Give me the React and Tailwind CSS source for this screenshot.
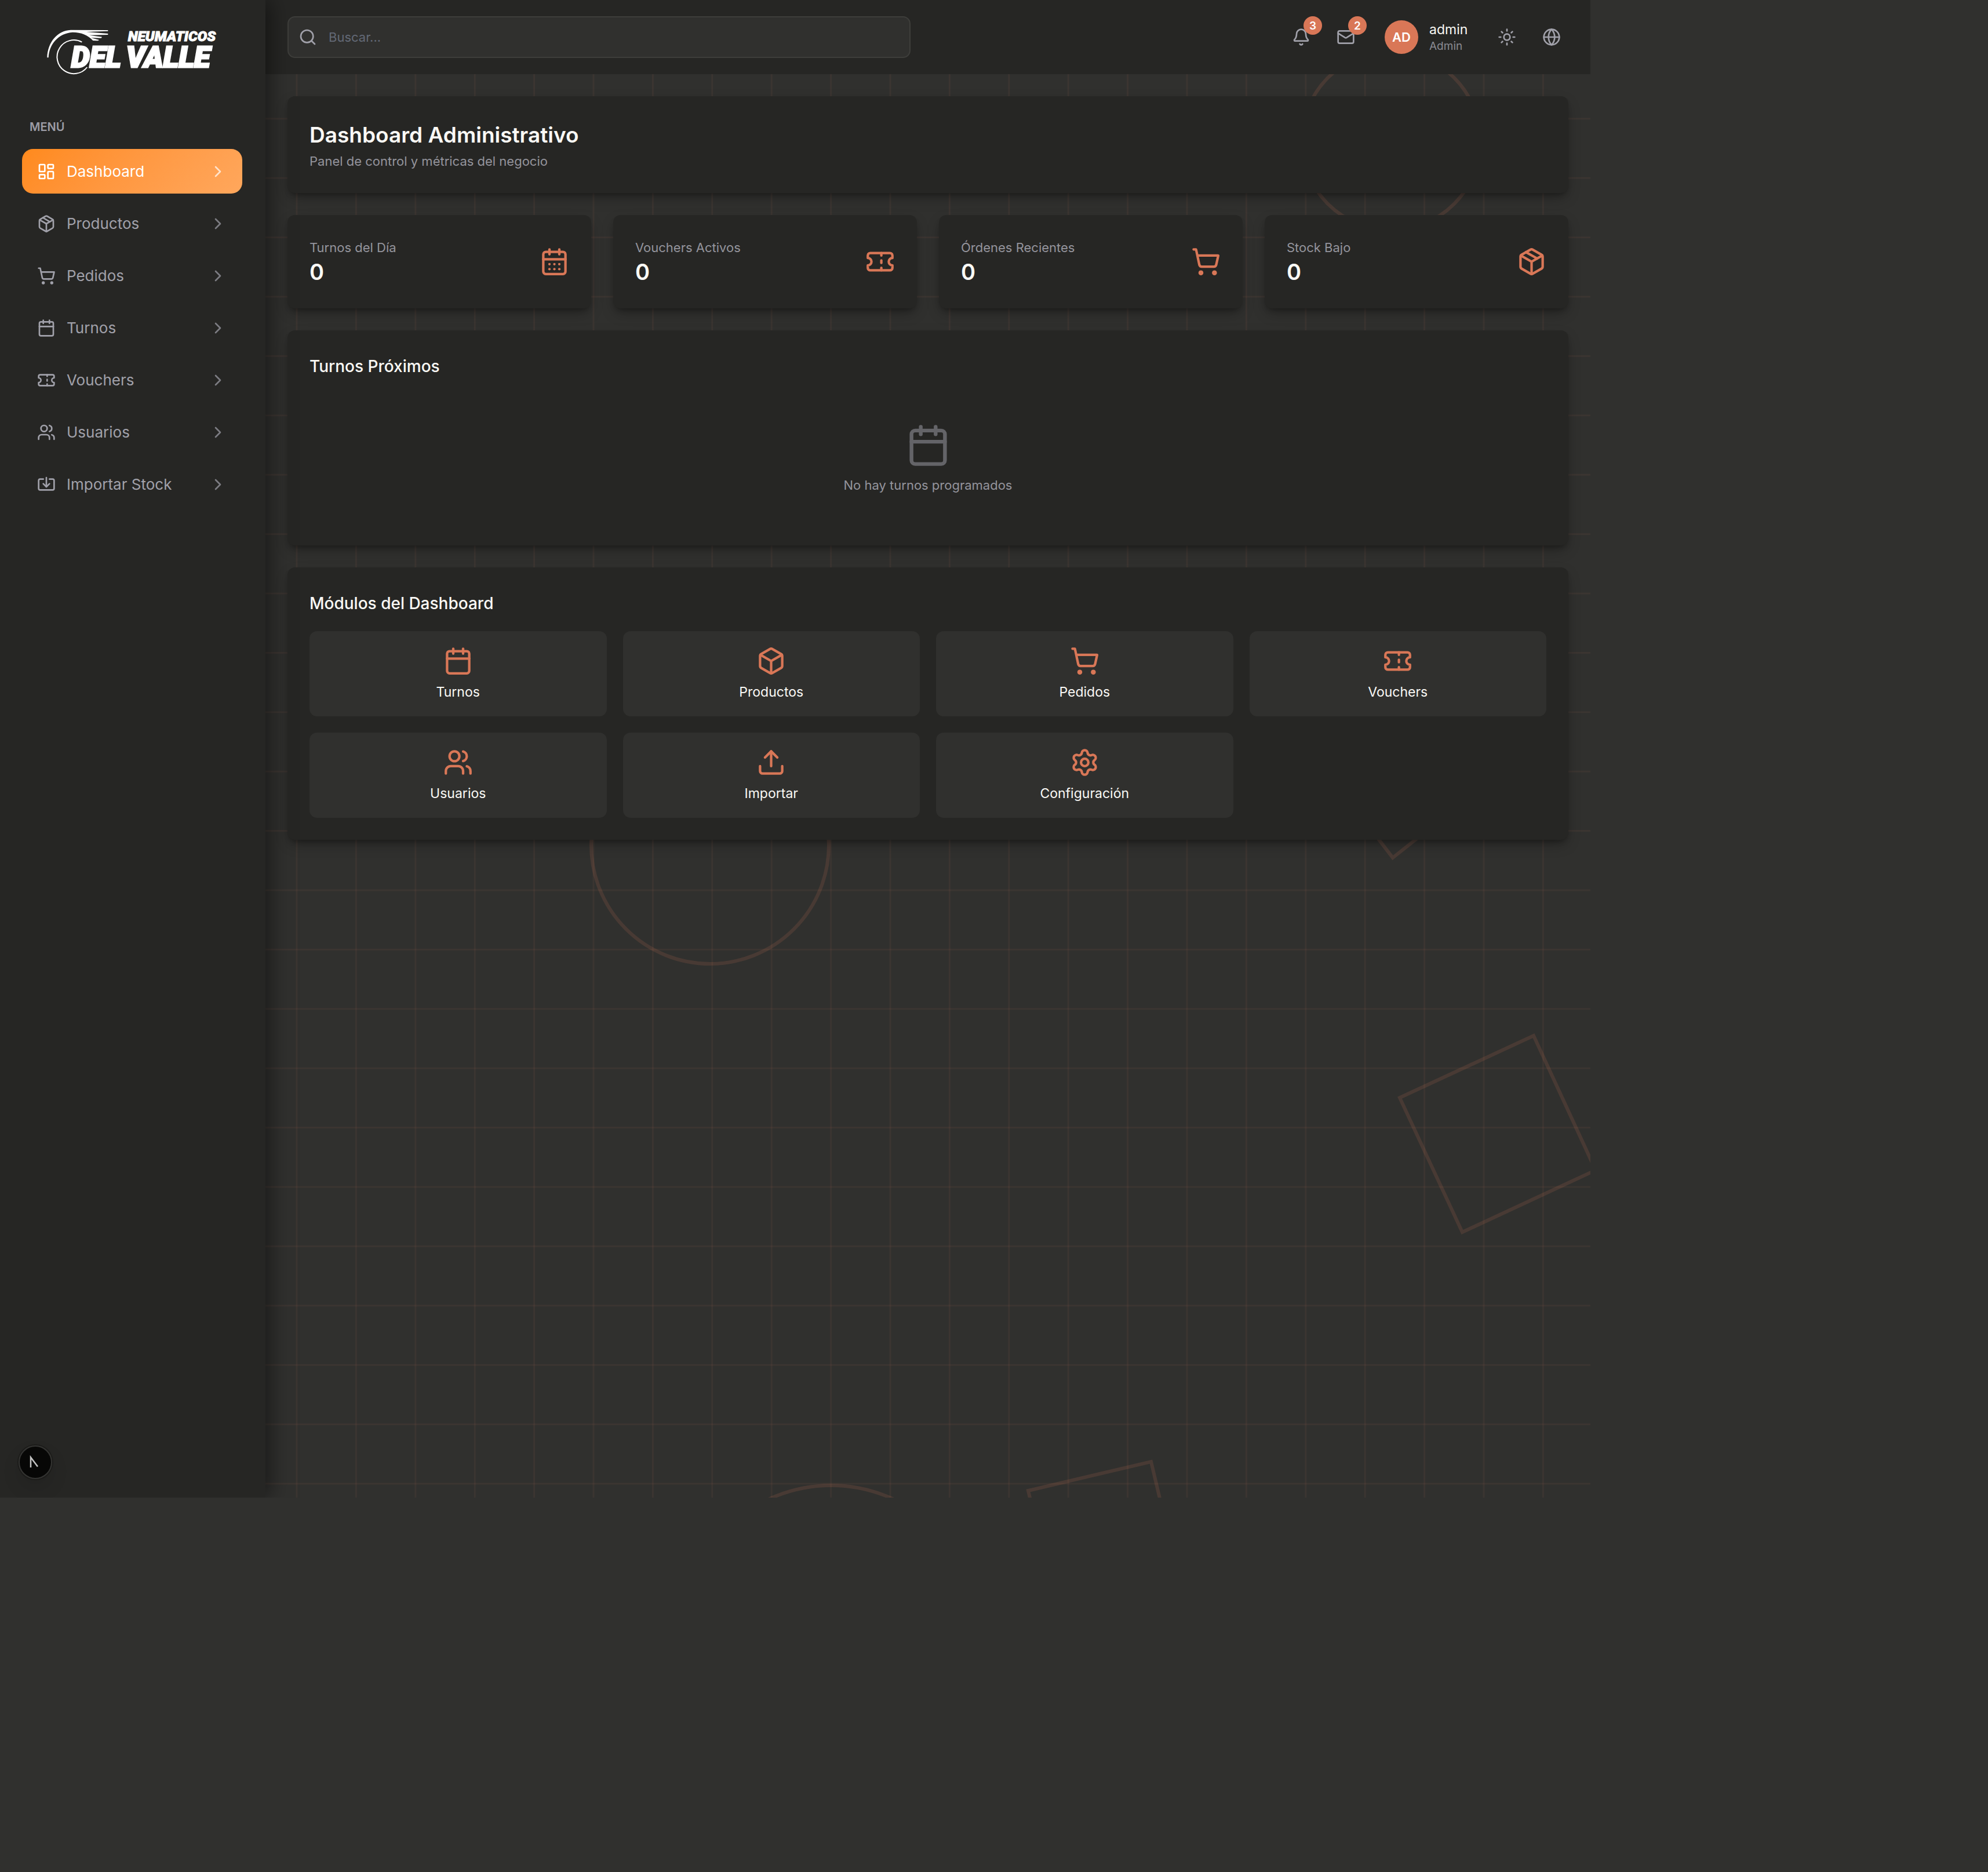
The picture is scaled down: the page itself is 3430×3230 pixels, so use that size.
import {
  Bell, Box, Calendar, CalendarDays, ChevronRight, Globe, Import, LayoutDashboard,
  Mail, Package, Search, Settings, ShoppingCart, Sun, Ticket, Upload, Users,
} from "lucide-react";

const NAV = [
  { label: "Dashboard", icon: LayoutDashboard, active: true },
  { label: "Productos", icon: Package },
  { label: "Pedidos", icon: ShoppingCart },
  { label: "Turnos", icon: Calendar },
  { label: "Vouchers", icon: Ticket },
  { label: "Usuarios", icon: Users },
  { label: "Importar Stock", icon: Import },
];

const STATS = [
  { label: "Turnos del Día", value: 0, icon: CalendarDays },
  { label: "Vouchers Activos", value: 0, icon: Ticket },
  { label: "Órdenes Recientes", value: 0, icon: ShoppingCart },
  { label: "Stock Bajo", value: 0, icon: Package },
];

const MODULES = [
  { label: "Turnos", icon: Calendar },
  { label: "Productos", icon: Box },
  { label: "Pedidos", icon: ShoppingCart },
  { label: "Vouchers", icon: Ticket },
  { label: "Usuarios", icon: Users },
  { label: "Importar", icon: Upload },
  { label: "Configuración", icon: Settings },
];

const CARD =
  "rounded-[13px] bg-[#262624] shadow-[0_10px_24px_-4px_rgba(0,0,0,0.3),0_6px_10px_-4px_rgba(0,0,0,0.3)]";

function Logo() {
  return (
    <svg viewBox="0 0 960 300" className="h-[100px] w-[320px] overflow-visible fill-white" role="img" aria-label="Neumaticos Del Valle">
      <path d="M40 178C42 100 92 38 162 35L355 36V41L242 45L355 54V60L257 62L324 71L320 77L267 76L310 87L302 91L277 90C252 62 217 47 172 47C97 52 50 110 47 178Z" />
      <path d="M220 98A87 87 0 1 0 247 228" fill="none" stroke="white" strokeWidth="6" />
      <text x="458" y="92" fontSize="74" className="font-['Roboto',sans-serif] font-black italic" stroke="white" strokeWidth="3">
        NEUMATICOS
      </text>
      <g className="font-['Roboto',sans-serif] font-black italic" fontSize="152" stroke="white" strokeWidth="9">
        <text x="165" y="228">DEL</text>
        <text x="449" y="228">VALLE</text>
      </g>
    </svg>
  );
}

function Backdrop() {
  return (
    <svg className="absolute inset-0 size-full" aria-hidden="true" fill="none" stroke="#d97757">
      <defs>
        <pattern id="grid" x="-51.2" y="-51.2" width="102.4" height="102.4" patternUnits="userSpaceOnUse">
          <path d="M51.2 0V102.4" stroke="#d97757" strokeOpacity="0.065" strokeWidth="3" />
          <path d="M0 51.2H102.4" stroke="#d97757" strokeOpacity="0.065" strokeWidth="3" />
        </pattern>
      </defs>
      <rect width="100%" height="100%" fill="url(#grid)" stroke="none" />
      <g strokeOpacity="0.15" strokeWidth="6">
        <circle cx="2400" cy="243" r="154" />
        <circle cx="1225" cy="1458" r="205" />
        <circle cx="1434" cy="2819" r="256" />
        <path d="M2403 1480L2520 1387L2429 1268L2312 1361Z" />
        <path d="M2646 1787L2415 1894L2523 2126L2753 2019Z" />
        <path d="M1774 2572L1986 2522L2036 2733L1824 2783Z" />
      </g>
    </svg>
  );
}

function Sidebar() {
  return (
    <aside className="relative z-20 flex w-[458px] shrink-0 flex-col bg-[#262624] pt-[40px] pr-[40px] pl-[38px] shadow-[6px_0_36px_rgba(0,0,0,0.5)]">
      <a href="#" className="self-center">
        <Logo />
      </a>
      <h2 className="mt-[66px] pl-[13px] text-[20px] leading-[26px] font-semibold text-[#9c9ca5]">MENÚ</h2>
      <nav className="mt-[25px] grid auto-rows-[77px] gap-[13px]">
        {NAV.map(({ label, icon: Icon, active }) => (
          <a
            key={label}
            href="#"
            className={
              active
                ? "flex items-center gap-[19px] rounded-[19px] bg-linear-135 from-[#ff8a1c] to-[#ffa75c] px-[26px] text-[26px] text-white"
                : "flex items-center gap-[19px] rounded-[19px] px-[26px] text-[26px] text-[#a1a1aa]"
            }
          >
            <Icon size={32} />
            <span className="grow">{label}</span>
            <ChevronRight size={32} className="opacity-70" />
          </a>
        ))}
      </nav>
      <button
        type="button"
        aria-label="Next.js"
        className="absolute bottom-[32px] left-[32px] flex size-[58px] items-center justify-center rounded-full border-2 border-[#343432] bg-[#070706] shadow-[0_0_0_2px_#1c1c1a,0_16px_32px_rgba(0,0,0,0.1)]"
      >
        <svg viewBox="0 0 24 24" className="size-[24px]" fill="none" stroke="#c4c4c4" strokeWidth="2.5" aria-hidden="true">
          <path d="M4 21V3.500L16 19.500" />
        </svg>
      </button>
    </aside>
  );
}

function IconButton({ label, icon: Icon, badge }) {
  return (
    <button type="button" aria-label={label} className="relative rounded-[13px] p-[13px] text-[#a1a1aa]">
      <Icon size={32} />
      {badge && (
        <span className="absolute -top-[7px] -right-[7px] flex size-[32px] items-center justify-center rounded-full bg-[#d97757] text-[19px] leading-none font-semibold text-white">
          {badge}
        </span>
      )}
    </button>
  );
}

function Header() {
  return (
    <header className="relative z-10 flex h-[128px] items-center justify-between bg-[#262624] px-[38px]">
      <label
        htmlFor="buscar"
        className="flex h-[72px] w-full max-w-[1075px] items-center gap-[20px] rounded-[13px] border-2 border-[#3e3e3b] bg-[#30302e] px-[17px]"
      >
        <Search size={32} className="text-[#a1a1aa]" />
        <input
          id="buscar"
          type="search"
          aria-label="Buscar"
          placeholder="Buscar..."
          className="min-w-0 grow bg-transparent text-[22px] text-white outline-none placeholder:text-[#636976]"
        />
      </label>
      <div className="flex items-center gap-[19px]">
        <IconButton label="Notificaciones" icon={Bell} badge="3" />
        <IconButton label="Mensajes" icon={Mail} badge="2" />
        <button type="button" className="flex items-center gap-[19px] px-[19px] text-left">
          <span className="flex size-[58px] items-center justify-center rounded-full bg-[#d97757] text-[22px] font-semibold text-white">
            AD
          </span>
          <span className="flex min-w-[67px] flex-col">
            <span className="text-[23px] leading-[32px] text-[#faf9f5]">admin</span>
            <span className="text-[19px] leading-[26px] text-[#8b8b93]">Admin</span>
          </span>
        </button>
        <IconButton label="Cambiar tema" icon={Sun} />
        <IconButton label="Idioma" icon={Globe} />
      </div>
    </header>
  );
}

export default function App() {
  return (
    <div className="min-h-screen bg-[#30302e] font-['Inter',sans-serif] text-[#faf9f5]">
      <div className="relative flex min-h-[80vh] w-4/5 overflow-hidden">
        <Backdrop />
        <Sidebar />
        <div className="relative min-w-0 grow">
          <Header />
          <main className="relative flex flex-col gap-[38px] p-[38px]">
            <section className={`${CARD} p-[38px]`}>
              <h1 className="text-[37px] leading-[57px] font-semibold">Dashboard Administrativo</h1>
              <p className="text-[22px] leading-[34px] text-[#94949c]">Panel de control y métricas del negocio</p>
            </section>

            <section className="grid grid-cols-4 gap-[38px]">
              {STATS.map(({ label, value, icon: Icon }) => (
                <div key={label} className={`${CARD} flex items-center justify-between p-[38px]`}>
                  <div>
                    <p className="text-[22px] leading-[36px] text-[#94949c]">{label}</p>
                    <p className="text-[38px] leading-[49px] font-semibold">{value}</p>
                  </div>
                  <Icon size={51} className="text-[#d97757]" />
                </div>
              ))}
            </section>

            <section className={`${CARD} p-[38px]`}>
              <h2 className="text-[28px] leading-[48px] font-medium">Turnos Próximos</h2>
              <div className="mt-[26px] flex flex-col items-center gap-[12px] py-[48px]">
                <Calendar size={77} className="text-[#646468]" />
                <p className="text-[22px] leading-[36px] text-[#94949c]">No hay turnos programados</p>
              </div>
            </section>

            <section className={`${CARD} p-[38px]`}>
              <h2 className="text-[28px] leading-[48px] font-medium">Módulos del Dashboard</h2>
              <div className="mt-[24px] grid grid-cols-4 gap-[28px]">
                {MODULES.map(({ label, icon: Icon }) => (
                  <a
                    key={label}
                    href="#"
                    className="flex flex-col items-center gap-[12px] rounded-[13px] bg-[#30302e] p-[26px] text-[23px] leading-[32px]"
                  >
                    <Icon size={51} className="text-[#d97757]" />
                    {label}
                  </a>
                ))}
              </div>
            </section>
          </main>
        </div>
      </div>
    </div>
  );
}
